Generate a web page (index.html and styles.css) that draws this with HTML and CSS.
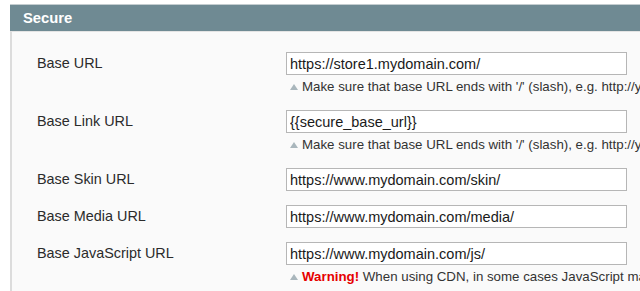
FILE: index.html
```html
<!DOCTYPE html>
<html lang="en">
<head>
  <meta charset="UTF-8" />
  <title>Secure</title>
  <link rel="stylesheet" href="styles.css">
</head>
<body>

  <div class="section">
    <div class="section-head">Secure</div>

    <div class="section-body">
      <div class="row">
        <label for="base_url">Base URL</label>
        <div class="value">
          <input type="text" id="base_url" value="https://store1.mydomain.com/">
          <p class="note">Make sure that base URL ends with '/' (slash), e.g. http://yourdomain/magento/</p>
        </div>
      </div>

      <div class="row">
        <label for="base_link_url">Base Link URL</label>
        <div class="value">
          <input type="text" id="base_link_url" value="{{secure_base_url}}">
          <p class="note">Make sure that base URL ends with '/' (slash), e.g. http://yourdomain/magento/</p>
        </div>
      </div>

      <div class="row">
        <label for="base_skin_url">Base Skin URL</label>
        <div class="value">
          <input type="text" id="base_skin_url" value="https://www.mydomain.com/skin/">
        </div>
      </div>

      <div class="row">
        <label for="base_media_url">Base Media URL</label>
        <div class="value">
          <input type="text" id="base_media_url" value="https://www.mydomain.com/media/">
        </div>
      </div>

      <div class="row">
        <label for="base_js_url">Base JavaScript URL</label>
        <div class="value">
          <input type="text" id="base_js_url" value="https://www.mydomain.com/js/">
          <p class="note"><strong class="warn">Warning!</strong> When using CDN, in some cases JavaScript may not run properly if CDN is not in your subdomain</p>
        </div>
      </div>
    </div>
  </div>

</body>
</html>
```

FILE: styles.css
```css
* {
  box-sizing: border-box;
}

body {
  font-family: "Liberation Sans", Arial, sans-serif;
  background: #fff;
  margin: 0;
  padding: 4px 0 0 10px;
  overflow: hidden;
  height: 291px;
  color: #2f2f2f;
}

.section {
  border-top: 1px solid #c4cdd0;
  width: 630px;
}

.section-head {
  background-color: #6f8a93;
  color: #fff;
  font-weight: bold;
  font-size: 14.8px;
  height: 26px;
  line-height: 26px;
  padding-left: 13px;
}

.section-body {
  background: #fafafa;
  border-left: 2px solid #dcdcdc;
  border-top: 1px solid #e4e4e4;
  padding: 20px 0 20px 25px;
  overflow: hidden;
}

.row {
  display: flex;
  margin-bottom: 14px;
}

.row label {
  flex: none;
  width: 249px;
  font-size: 14.4px;
  line-height: 23px;
  color: #2b2b2b;
}

.value {
  flex: none;
  width: 341px;
}

input {
  width: 341px;
  height: 23px;
  padding: 0 3px;
  font-family: "Liberation Sans", Arial, sans-serif;
  font-size: 14.5px;
  color: #1a1a1a;
  background: #fff;
  border: 1px solid #b6b6b6;
  border-radius: 0;
  display: block;
}

.note {
  margin: 4px 0 1px 0;
  font-size: 13.3px;
  line-height: 16px;
  white-space: nowrap;
  color: #333;
  padding-left: 16px;
  position: relative;
}

.note::before {
  content: "";
  position: absolute;
  left: 4px;
  top: 5px;
  border-left: 4px solid transparent;
  border-right: 4px solid transparent;
  border-bottom: 6px solid #a9b6bc;
}

.warn {
  color: #e60000;
}
```
